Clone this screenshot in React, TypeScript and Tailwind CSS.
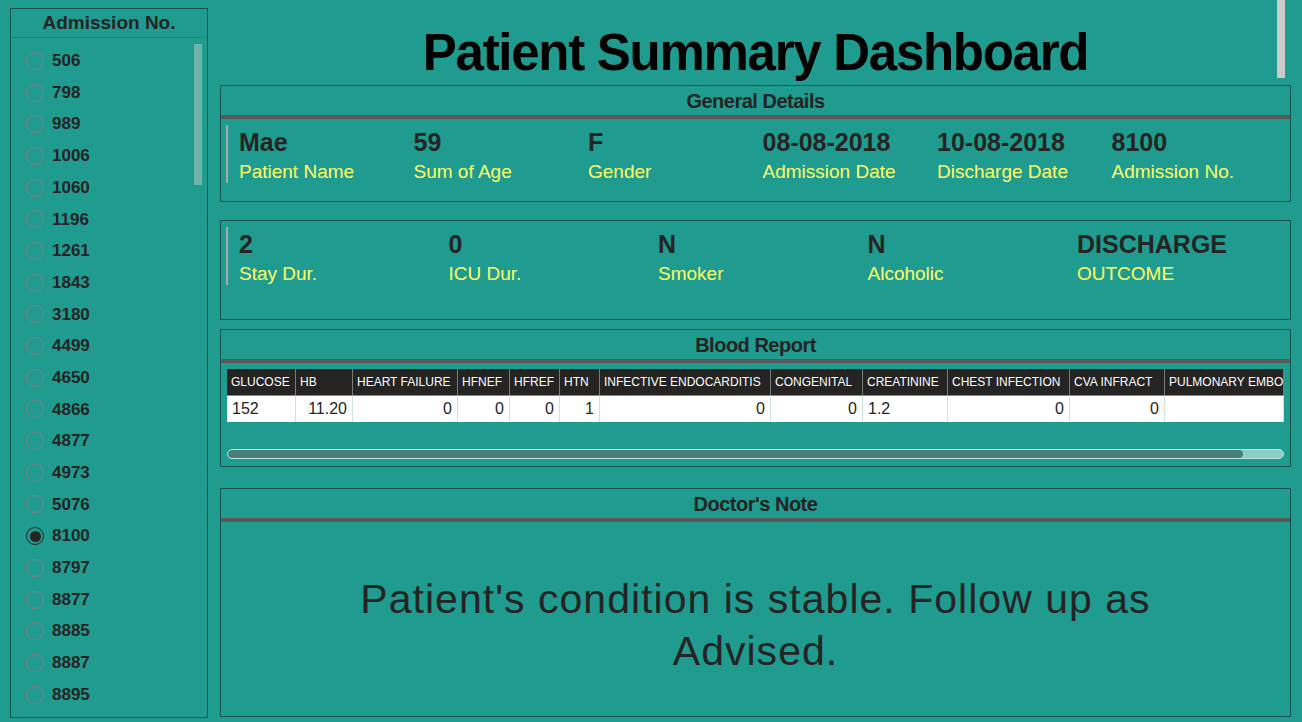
import React from "react";

const admissionNos = [
  "506", "798", "989", "1006", "1060", "1196", "1261", "1843", "3180", "4499", "4650",
  "4866", "4877", "4973", "5076", "8100", "8797", "8877", "8885", "8887", "8895",
];

const generalDetails = [
  { value: "Mae", label: "Patient Name" },
  { value: "59", label: "Sum of Age" },
  { value: "F", label: "Gender" },
  { value: "08-08-2018", label: "Admission Date" },
  { value: "10-08-2018", label: "Discharge Date" },
  { value: "8100", label: "Admission No." },
];

const stayDetails = [
  { value: "2", label: "Stay Dur." },
  { value: "0", label: "ICU Dur." },
  { value: "N", label: "Smoker" },
  { value: "N", label: "Alcoholic" },
  { value: "DISCHARGE", label: "OUTCOME" },
];

const bloodColumns = [
  { name: "GLUCOSE", w: "w-[69px]", value: "152", right: false },
  { name: "HB", w: "w-[57px]", value: "11.20", right: true },
  { name: "HEART FAILURE", w: "w-[105px]", value: "0", right: true },
  { name: "HFNEF", w: "w-[52px]", value: "0", right: true },
  { name: "HFREF", w: "w-[50px]", value: "0", right: true },
  { name: "HTN", w: "w-[40px]", value: "1", right: true },
  { name: "INFECTIVE ENDOCARDITIS", w: "w-[171px]", value: "0", right: true },
  { name: "CONGENITAL", w: "w-[92px]", value: "0", right: true },
  { name: "CREATININE", w: "w-[85px]", value: "1.2", right: false },
  { name: "CHEST INFECTION", w: "w-[122px]", value: "0", right: true },
  { name: "CVA INFRACT", w: "w-[95px]", value: "0", right: true },
  { name: "PULMONARY EMBO", w: "w-[119px]", value: "", right: true },
];

function CardTitle({ title }: { title: string }) {
  return (
    <>
      <div className="h-[29px] flex items-center justify-center text-[20px] font-bold text-[#252423] tracking-tight">
        {title}
      </div>
      <div className="h-[4px] bg-[#595959]" />
    </>
  );
}

function KpiRow({ items, colW }: { items: { value: string; label: string }[]; colW: string }) {
  return (
    <div className="flex pl-[5px]">
      <div className="w-[2px] h-[58px] bg-[#a9a9a9] mr-[11px]" />
      {items.map((it) => (
        <div key={it.label} className={`${colW} flex flex-col`}>
          <div className="text-[25px] leading-[30px] font-bold text-[#252423] mt-[2px]">{it.value}</div>
          <div className="text-[19px] leading-[24px] text-[#ffff66] mt-[3px]">{it.label}</div>
        </div>
      ))}
    </div>
  );
}

export default function App() {
  return (
    <div className="relative w-[1302px] h-[722px] overflow-hidden bg-[#209b8f] font-['Liberation_Sans',Arial,sans-serif] flex">
      {/* page scrollbar */}
      <div className="absolute left-[1277px] top-0 w-[8px] h-[78px] bg-[#cacaca]" />

      {/* Slicer */}
      <div className="ml-[10px] mt-[8px] w-[198px] h-[710px] border border-[#17534d] flex flex-col">
        <div className="h-[29px] flex items-center justify-center text-[19px] font-bold text-[#252423] border-b border-[#4d6d69]">
          Admission No.
        </div>
        <div className="relative flex-1 pt-[7px]">
          <div className="absolute right-[5px] top-[6px] w-[8px] h-[141px] bg-[#6fb5ad]" />
          {admissionNos.map((n) => (
            <div key={n} className="flex items-center h-[31.7px] pl-[15px]">
              {n === "8100" ? (
                <div className="w-[18px] h-[18px] rounded-full border-[1.5px] border-[#252423] flex items-center justify-center">
                  <div className="w-[11px] h-[11px] rounded-full bg-[#252423]" />
                </div>
              ) : (
                <div className="w-[18px] h-[18px] rounded-full border border-[#8a7f7f]" />
              )}
              <span className="ml-[8px] text-[17px] font-bold text-[#252423]">{n}</span>
            </div>
          ))}
        </div>
      </div>

      {/* Main */}
      <div className="ml-[12px] w-[1071px] flex flex-col">
        <div className="h-[85px] flex items-center justify-center pt-[22px]">
          <h1 className="text-[51px] font-bold text-black tracking-tight">Patient Summary Dashboard</h1>
        </div>

        {/* General details */}
        <div className="h-[117px] border border-[#17534d]">
          <CardTitle title="General Details" />
          <div className="pt-[6px]">
            <KpiRow items={generalDetails} colW="w-[174.5px]" />
          </div>
        </div>

        {/* Stay details */}
        <div className="mt-[18px] h-[100px] border border-[#17534d] pt-[6px]">
          <KpiRow items={stayDetails} colW="w-[209.5px]" />
        </div>

        {/* Blood report */}
        <div className="mt-[9px] h-[138px] border border-[#17534d]">
          <CardTitle title="Blood Report" />
          <div className="mx-[6px] mt-[6px] overflow-hidden">
            <div className="flex w-max">
              {bloodColumns.map((c) => (
                <div key={c.name} className={`${c.w} shrink-0 flex flex-col`}>
                  <div className="h-[26px] bg-[#252423] text-white text-[12px] flex items-center px-[4px] border-r border-[#7a7a7a] whitespace-nowrap overflow-hidden">
                    {c.name}
                  </div>
                  <div
                    className={`h-[27px] bg-white border-t border-[#5b8fd0] border-r border-r-[#cfe0dc] text-[16px] text-[#252423] flex items-center px-[5px] ${
                      c.right ? "justify-end" : "justify-start"
                    }`}
                  >
                    {c.value}
                  </div>
                </div>
              ))}
            </div>
          </div>
          <div className="mx-[6px] mt-[27px] h-[10px] rounded-full bg-[#8dcfc6] border border-[#b7e3dd] overflow-hidden">
            <div className="h-full w-[1015px] rounded-full bg-[#4a7e78]" />
          </div>
        </div>

        {/* Doctor's note */}
        <div className="mt-[21px] h-[229px] border border-[#17534d] flex flex-col">
          <CardTitle title="Doctor's Note" />
          <div className="flex-1 flex items-center justify-center px-[100px] pt-[12px]">
            <p className="text-center text-[41px] leading-[52px] text-[#252423] tracking-wide">
              Patient's condition is stable. Follow up as Advised.
            </p>
          </div>
        </div>
      </div>
    </div>
  );
}
